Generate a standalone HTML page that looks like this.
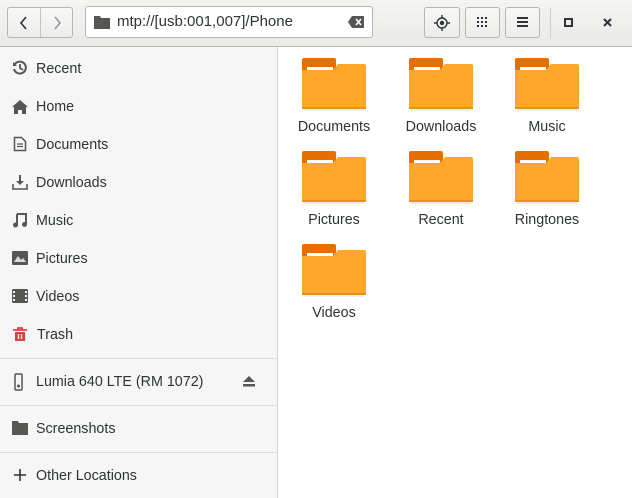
<!DOCTYPE html><html><head><style>
body{margin:0;width:632px;height:498px;overflow:hidden;font-family:"Liberation Sans",sans-serif;font-size:14.3px;color:#2e3436;position:relative;background:#fff}
.hdr{position:absolute;left:0;top:0;width:632px;height:46px;background:linear-gradient(#f4f4f3,#e9e9e7);border-bottom:1px solid #bfb8b1}
.btn{position:absolute;top:7px;height:31px;border:1px solid #b6b6b3;border-radius:3px;background:linear-gradient(#f8f8f7,#ececea);box-sizing:border-box}
.side{position:absolute;left:0;top:47px;width:277px;height:451px;background:#f6f6f6;border-right:1px solid #d5d5d3}
.it{position:absolute;left:36px;font-size:14.3px}
.ic{position:absolute;left:12px}
.sep{position:absolute;left:0;width:277px;height:1px;background:#dcdcdb}
.f{position:absolute;width:100px;text-align:center;font-size:14.3px}
.f svg{display:block;margin:0 auto}
.f div{margin-top:7px}
</style></head><body>
<div class="hdr"></div>
<div class="btn" style="left:7px;width:66px"><div style="position:absolute;left:32px;top:0;width:1px;height:29px;background:#c4c4c1"></div>
<svg style="position:absolute;left:10px;top:8px" width="12" height="14"><path d="M8 1L3 7l5 6" stroke="#2e3436" stroke-width="1.6" fill="none"/></svg>
<svg style="position:absolute;left:43px;top:8px" width="12" height="14"><path d="M4 1l5 6-5 6" stroke="#8e9192" stroke-width="1.4" fill="none"/></svg></div>
<div style="position:absolute;left:85px;top:6px;width:288px;height:32px;border:1px solid #b6b6b3;border-radius:3px;background:#fff;box-sizing:border-box">
<svg style="position:absolute;left:8px;top:8px" width="16" height="14"><path d="M0 1h6l1 2h9v11H0z" fill="#555753"/></svg>
<span style="position:absolute;left:31px;top:6px;font-size:15px">mtp://[usb:001,007]/Phone</span>
<svg style="position:absolute;left:262px;top:9px" width="16" height="12"><path d="M4 0h12v12H4L0 6z" fill="#555753"/><path d="M8 3l5 6M13 3l-5 6" stroke="#fff" stroke-width="1.6"/></svg></div>
<div class="btn" style="left:424px;width:36px"><svg style="position:absolute;left:9px;top:7px" width="16" height="16"><circle cx="8" cy="8" r="5" stroke="#2e3436" stroke-width="1.4" fill="none"/><circle cx="8" cy="8" r="2.2" fill="#2e3436"/><path d="M8 0v3M8 13v3M0 8h3M13 8h3" stroke="#2e3436" stroke-width="1.4"/></svg></div>
<div class="btn" style="left:465px;width:35px"><svg style="position:absolute;left:11px;top:9px" width="11" height="11" fill="#2e3436"><rect x="0" y="0" width="2" height="2"/><rect x="4" y="0" width="2" height="2"/><rect x="8" y="0" width="2" height="2"/><rect x="0" y="4" width="2" height="2"/><rect x="4" y="4" width="2" height="2"/><rect x="8" y="4" width="2" height="2"/><rect x="0" y="8" width="2" height="2"/><rect x="4" y="8" width="2" height="2"/><rect x="8" y="8" width="2" height="2"/></svg></div>
<div class="btn" style="left:505px;width:35px"><svg style="position:absolute;left:11px;top:9px" width="12" height="11" fill="#2e3436"><rect y="0" width="11" height="2"/><rect y="4" width="11" height="2"/><rect y="8" width="11" height="2"/></svg></div>
<div style="position:absolute;left:550px;top:8px;width:1px;height:30px;background:#cfcfcc"></div>
<svg style="position:absolute;left:564px;top:18px" width="10" height="10"><rect x="1" y="1" width="7" height="7" stroke="#2e3436" stroke-width="2" fill="none"/></svg>
<svg style="position:absolute;left:603px;top:18px" width="10" height="10"><path d="M1 1l7 7M8 1l-7 7" stroke="#2e3436" stroke-width="2"/></svg>
<div class="side">
<svg class="ic" style="top:13px" width="16" height="16"><path d="M3 4A6 6 0 1 1 2 9" stroke="#555753" stroke-width="2" fill="none"/><path d="M1 2v4h4z" fill="#555753"/><path d="M8 4v4l3 2" stroke="#555753" stroke-width="1.8" fill="none"/></svg><div class="it" style="top:14px">Recent</div>
<svg class="ic" style="top:52px" width="16" height="16"><path d="M8 1L0 8h2v7h4v-4h4v4h4V8h2z" fill="#555753"/></svg><div class="it" style="top:52px">Home</div>
<svg class="ic" style="top:89px" width="16" height="16"><path d="M2.5 1.5h7l4 4v9h-11z" stroke="#555753" stroke-width="1.5" fill="none"/><path d="M5 8h6M5 10.5h6" stroke="#555753" stroke-width="1.3"/></svg><div class="it" style="top:90px">Documents</div>
<svg class="ic" style="top:127px" width="16" height="16"><path d="M7 1h2v6h3l-4 4-4-4h3z" fill="#555753"/><path d="M1 10v5h14v-5" stroke="#555753" stroke-width="1.6" fill="none"/></svg><div class="it" style="top:128px">Downloads</div>
<svg class="ic" style="top:165px" width="16" height="16"><path d="M5 2h9v10.5" stroke="#555753" stroke-width="2" fill="none"/><path d="M5 2v11" stroke="#555753" stroke-width="2"/><circle cx="3.5" cy="13" r="2.5" fill="#555753"/><circle cx="12.5" cy="12.5" r="2.5" fill="#555753"/></svg><div class="it" style="top:166px">Music</div>
<svg class="ic" style="top:203px" width="16" height="16"><rect x="0" y="1" width="16" height="14" rx="1" fill="#555753"/><path d="M2 12l4-6 3 4 2-2 3 4z" fill="#dcdcdc"/></svg><div class="it" style="top:204px">Pictures</div>
<svg class="ic" style="top:241px" width="16" height="16"><rect x="0" y="1" width="16" height="14" rx="1" fill="#555753"/><g fill="#f6f6f6"><rect x="1" y="3" width="2" height="2"/><rect x="1" y="7" width="2" height="2"/><rect x="1" y="11" width="2" height="2"/><rect x="13" y="3" width="2" height="2"/><rect x="13" y="7" width="2" height="2"/><rect x="13" y="11" width="2" height="2"/></g></svg><div class="it" style="top:242px">Videos</div>
<svg class="ic" style="top:279px" width="16" height="16"><path d="M1 4h14M6 4V2h4v2" stroke="#e0403d" stroke-width="1.8" fill="none"/><path d="M3 6h10v9H3z" fill="#e0403d"/><path d="M6.5 8v5M9.5 8v5" stroke="#f6f6f6" stroke-width="1.3"/></svg><div class="it" style="top:280px;left:37px">Trash</div>
<div class="sep" style="top:311px"></div>
<svg class="ic" style="top:326px;left:14px" width="10" height="18"><rect x="1" y="1" width="7" height="16" rx="1" stroke="#555753" stroke-width="1.5" fill="none"/><circle cx="4.5" cy="13" r="1.5" fill="#555753"/></svg><div class="it" style="top:327px">Lumia 640 LTE (RM 1072)</div>
<svg style="position:absolute;left:242px;top:329px" width="14" height="12" fill="#555753"><path d="M7 0l6 6H1z"/><rect x="1" y="8" width="12" height="2.5"/></svg>
<div class="sep" style="top:358px"></div>
<svg class="ic" style="top:374px" width="16" height="14"><path d="M0 0h6l1 2h9v12H0z" fill="#555753"/></svg><div class="it" style="top:374px">Screenshots</div>
<div class="sep" style="top:405px"></div>
<svg class="ic" style="top:422px;left:14px" width="12" height="12"><path d="M6 0v12M0 6h12" stroke="#2e3436" stroke-width="1.6"/></svg><div class="it" style="top:421px">Other Locations</div>
</div>
<svg width="0" height="0" style="position:absolute"><defs><g id="fd"><path d="M0 2a2 2 0 0 1 2-2h30a2 2 0 0 1 2 2v12H0z" fill="#e96e00"/><rect x="5" y="9" width="26" height="3" fill="#fff"/><path d="M0 12h31l5-6h26a2 2 0 0 1 2 2v41H0z" fill="#fea72a"/><rect x="0" y="49" width="64" height="2" fill="#e8911c"/><rect x="2" y="51" width="60" height="2" fill="#ececec"/></g></defs></svg>
<div class="f" style="left:284px;top:58px"><svg width="64" height="54"><use href="#fd"/></svg><div>Documents</div></div>
<div class="f" style="left:391px;top:58px"><svg width="64" height="54"><use href="#fd"/></svg><div>Downloads</div></div>
<div class="f" style="left:497px;top:58px"><svg width="64" height="54"><use href="#fd"/></svg><div>Music</div></div>
<div class="f" style="left:284px;top:151px"><svg width="64" height="54"><use href="#fd"/></svg><div>Pictures</div></div>
<div class="f" style="left:391px;top:151px"><svg width="64" height="54"><use href="#fd"/></svg><div>Recent</div></div>
<div class="f" style="left:497px;top:151px"><svg width="64" height="54"><use href="#fd"/></svg><div>Ringtones</div></div>
<div class="f" style="left:284px;top:244px"><svg width="64" height="54"><use href="#fd"/></svg><div>Videos</div></div>
</body></html>
